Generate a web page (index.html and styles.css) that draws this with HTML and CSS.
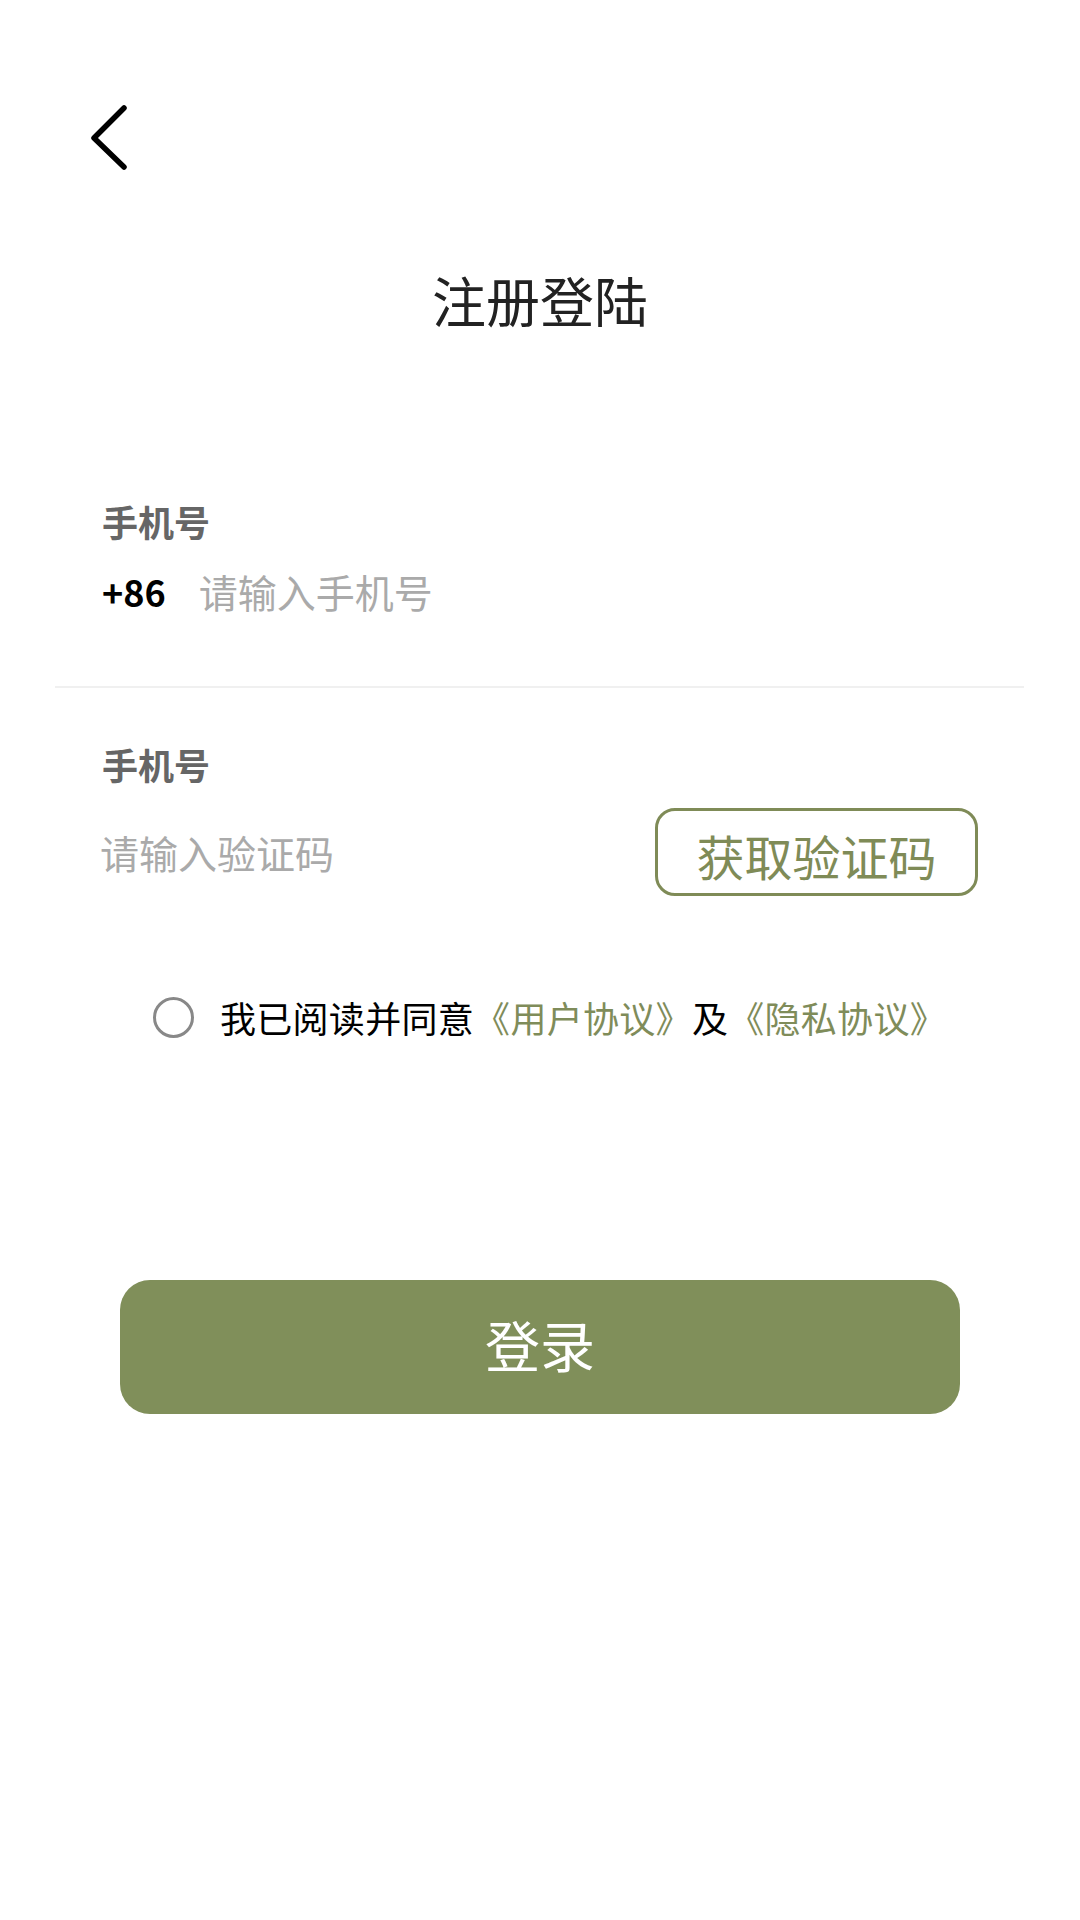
FILE: index.html
```html
<!DOCTYPE html>
<html lang="zh-CN">
<head>
    <meta charset="UTF-8">
    <title>注册登陆</title>
    <link rel="stylesheet" href="styles.css">
</head>
<body>
    <div class="page">
        <div class="header">
            <span class="back">
                <svg width="44" height="70" viewBox="0 0 44 70">
                    <polyline points="36,5 6,35 36,64" fill="none" stroke="#000" stroke-width="5.5" stroke-linecap="round" stroke-linejoin="round"/>
                </svg>
            </span>
        </div>

        <h2 class="title">注册登陆</h2>

        <div class="field">
            <label class="field-label" for="phone">手机号</label>
            <div class="field-row">
                <span class="prefix">+86</span>
                <input type="text" id="phone" placeholder="请输入手机号">
            </div>
        </div>

        <div class="divider"></div>

        <div class="field">
            <label class="field-label" for="code">手机号</label>
            <div class="field-row code-row">
                <input type="text" id="code" placeholder="请输入验证码">
                <button class="code-btn">获取验证码</button>
            </div>
        </div>

        <div class="agree">
            <span class="check"></span>
            <span class="agree-text">我已阅读并同意<a class="link">《用户协议》</a>及<a class="link">《隐私协议》</a></span>
        </div>

        <button class="login-btn">登录</button>
    </div>
</body>
</html>
```

FILE: styles.css
```css
body {
    margin: 0;
    background-color: #fff;
    font-family: "Noto Sans CJK SC", "Noto Sans", sans-serif;
    color: #222;
}

.page {
    width: 1080px;
    height: 1920px;
}

.header {
    padding: 103px 0 0 88px;
    height: 70px;
}

.back {
    display: block;
    width: 44px;
    height: 70px;
}

.back svg {
    display: block;
}

.title {
    margin: 95px 0 0;
    font-size: 54px;
    font-weight: normal;
    line-height: 64px;
    text-align: center;
    color: #222;
}

.field {
    padding: 0 102px;
}

.field-label {
    display: block;
    margin-top: 167px;
    font-size: 36px;
    font-weight: bold;
    line-height: 44px;
    color: #666;
}

.field-row {
    display: flex;
    align-items: center;
    margin-top: 24px;
    height: 48px;
}

.prefix {
    font-size: 36px;
    font-weight: bold;
    color: #000;
    margin-right: 33px;
}

input {
    border: none;
    outline: none;
    padding: 0;
    font-family: inherit;
    font-size: 39px;
    color: #333;
    background: transparent;
    flex: 1;
    min-width: 0;
}

input::placeholder {
    color: #aaa;
}

.divider {
    margin: 71px 56px 0 55px;
    height: 2px;
    background-color: #f0f0f0;
}

.divider + .field .field-label {
    margin-top: 54px;
}

.code-row {
    margin-top: 22px;
    height: auto;
}

#code {
    margin-left: -2px;
}

.code-btn {
    width: 323px;
    height: 88px;
    padding: 6px 0 0;
    border: 3px solid #7f8b57;
    border-radius: 20px;
    background-color: #fff;
    font-family: inherit;
    font-size: 48px;
    color: #7f8b57;
    line-height: 1;
}

.agree {
    display: flex;
    align-items: center;
    justify-content: center;
    gap: 26px;
    margin-top: 97px;
    height: 48px;
    padding-left: 19px;
}

.check {
    width: 35px;
    height: 35px;
    border: 3px solid #888;
    border-radius: 50%;
}

.agree-text {
    font-size: 36px;
    line-height: 48px;
    letter-spacing: 0.3px;
    color: #000;
}

.link {
    color: #7f8c5a;
}

.login-btn {
    display: block;
    margin: 239px auto 0;
    width: 840px;
    height: 134px;
    border: none;
    border-radius: 30px;
    background-color: #808f5a;
    color: #fff;
    font-family: inherit;
    font-size: 55px;
    padding-bottom: 9px;
}
```
